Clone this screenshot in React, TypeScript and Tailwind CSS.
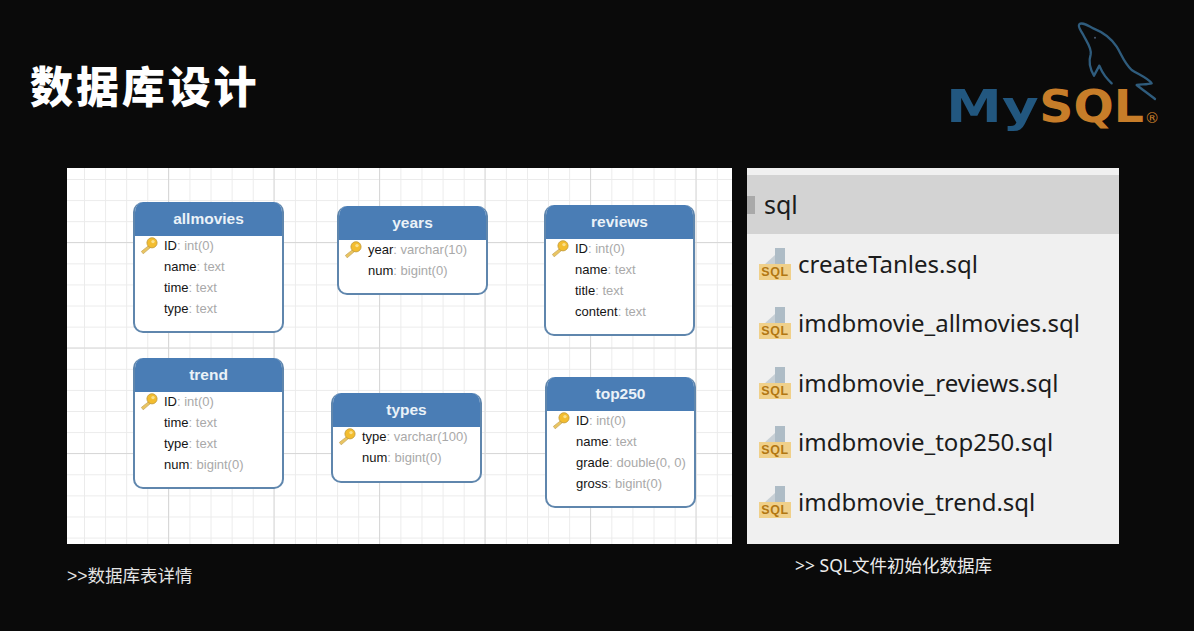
import React from "react";

type Field = { name: string; type: string; key?: boolean };
type Table = { title: string; cls: string; fields: Field[] };

const tables: Table[] = [
  {
    title: "allmovies",
    cls: "left-[66px] top-[34px] h-[131px]",
    fields: [
      { name: "ID", type: "int(0)", key: true },
      { name: "name", type: "text" },
      { name: "time", type: "text" },
      { name: "type", type: "text" },
    ],
  },
  {
    title: "years",
    cls: "left-[270px] top-[38px] h-[89px]",
    fields: [
      { name: "year", type: "varchar(10)", key: true },
      { name: "num", type: "bigint(0)" },
    ],
  },
  {
    title: "reviews",
    cls: "left-[477px] top-[37px] h-[131px]",
    fields: [
      { name: "ID", type: "int(0)", key: true },
      { name: "name", type: "text" },
      { name: "title", type: "text" },
      { name: "content", type: "text" },
    ],
  },
  {
    title: "trend",
    cls: "left-[66px] top-[190px] h-[131px]",
    fields: [
      { name: "ID", type: "int(0)", key: true },
      { name: "time", type: "text" },
      { name: "type", type: "text" },
      { name: "num", type: "bigint(0)" },
    ],
  },
  {
    title: "types",
    cls: "left-[264px] top-[225px] h-[90px]",
    fields: [
      { name: "type", type: "varchar(100)", key: true },
      { name: "num", type: "bigint(0)" },
    ],
  },
  {
    title: "top250",
    cls: "left-[478px] top-[209px] h-[131px]",
    fields: [
      { name: "ID", type: "int(0)", key: true },
      { name: "name", type: "text" },
      { name: "grade", type: "double(0, 0)" },
      { name: "gross", type: "bigint(0)" },
    ],
  },
];

const files = [
  "createTanles.sql",
  "imdbmovie_allmovies.sql",
  "imdbmovie_reviews.sql",
  "imdbmovie_top250.sql",
  "imdbmovie_trend.sql",
];

function KeyIcon() {
  return (
    <svg width="18" height="18" viewBox="0 0 18 18" className="shrink-0">
      <path d="M9.5 8 L1.4 14.4 L3.2 16.8 L11 10 Z" fill="#eac561" stroke="#c9a95f" strokeWidth="0.8" />
      <circle cx="12" cy="5.8" r="5.1" fill="#f3bd2f" stroke="#c09a3e" strokeWidth="0.8" />
      <circle cx="13" cy="4.6" r="1.7" fill="#fbe08a" />
    </svg>
  );
}

function SqlIcon() {
  return (
    <div className="relative h-[32px] w-[32px] shrink-0">
      <svg width="32" height="17" viewBox="0 0 32 17" className="block">
        <path d="M16 0 H26 V17 H16 Z" fill="#aebcc6" />
        <path d="M5 17 L16 7 V17 Z" fill="#c8d0d6" />
      </svg>
      <div className="absolute bottom-0 left-0 flex h-[16px] w-[32px] items-center justify-center bg-[#f0d08a] font-['Liberation_Sans',sans-serif] text-[12.5px] font-bold leading-none tracking-[0.6px] text-[#b27712]">
        SQL
      </div>
    </div>
  );
}

function TableCard({ table }: { table: Table }) {
  return (
    <div className={`absolute flex w-[151px] flex-col overflow-hidden rounded-[10px] border-2 border-t-0 border-[#5f86ad] bg-white ${table.cls}`}>
      <div className="-mx-[2px] flex h-[34px] shrink-0 items-center justify-center bg-[#4a7db5] text-[15.5px] font-bold text-[#eaf2f8]">
        {table.title}
      </div>
      <div className="-mt-px flex flex-col">
        {table.fields.map((f) => (
          <div key={f.name} className="flex h-[21px] shrink-0 items-center text-[13px]">
            <div className="flex w-[29px] shrink-0 justify-end pr-[6px]">{f.key ? <KeyIcon /> : null}</div>
            <span className="text-[#141414]">{f.name}</span>
            <span className="whitespace-pre text-[#a9a9a9]">: {f.type}</span>
          </div>
        ))}
      </div>
    </div>
  );
}

function MysqlLogo() {
  return (
    <svg width="260" height="140" viewBox="0 0 780 420" className="block shrink-0">
      <g transform="translate(450 15)" fill="none" stroke="#2f5c7d" strokeWidth="7" strokeLinejoin="round" strokeLinecap="round">
        <path d="M125 205 C110 190 100 180 88 152 L72 182 C62 165 55 140 62 118 C66 100 50 80 40 60 C32 45 22 35 28 28 C35 20 50 30 70 40 C100 52 125 72 140 95 C155 118 160 140 185 165 C205 178 235 190 245 205 C235 208 215 208 200 210 C215 222 240 240 255 252" />
        <circle cx="75" cy="68" r="3" fill="#4a5a70" stroke="none" />
      </g>
      <text x="78" y="336" textLength="278" lengthAdjust="spacingAndGlyphs" fontFamily="'DejaVu Sans', sans-serif" fontWeight="700" fontSize="132" fill="#22577f">
        My
      </text>
      <text x="358" y="336" textLength="314" lengthAdjust="spacingAndGlyphs" fontFamily="'DejaVu Sans', sans-serif" fontWeight="700" fontSize="132" fill="#c77d29">
        SQL
      </text>
      <text x="674" y="340" fontFamily="'DejaVu Sans', sans-serif" fontSize="44" fill="#c77d29">
        ®
      </text>
    </svg>
  );
}

export default function App() {
  return (
    <div className="flex h-[631px] w-[1194px] flex-col overflow-hidden bg-[#0a0a0a] font-['Liberation_Sans','Noto_Sans_CJK_SC',sans-serif]">
      {/* header */}
      <div className="flex h-[168px] shrink-0 items-start justify-between pl-[30px] pr-[14px] pt-[10px]">
        <h1 className="mt-[44px] font-['Noto_Sans_CJK_SC',sans-serif] text-[43px] font-black leading-[60px] tracking-[2.9px] text-white">
          数据库设计
        </h1>
        <MysqlLogo />
      </div>

      <div className="flex gap-[15px] pl-[67px]">
        {/* er diagram */}
        <div className="flex w-[665px] flex-col">
          <div className="relative h-[376px] bg-white bg-[linear-gradient(to_right,#d8d8d8_1px,transparent_1px),linear-gradient(to_bottom,#d8d8d8_1px,transparent_1px),linear-gradient(to_right,#ebebeb_1px,transparent_1px),linear-gradient(to_bottom,#ebebeb_1px,transparent_1px)] bg-[size:105.5px_105.5px,105.5px_105.5px,21.1px_21.1px,21.1px_21.1px] bg-[position:101px_74px,101px_74px,17px_11px,17px_11px] font-['Liberation_Sans',sans-serif]">
            {tables.map((t) => (
              <TableCard key={t.title} table={t} />
            ))}
          </div>
          <p className="mt-[19px] text-[17.5px] leading-[26px] text-[#e4e4e4]">&gt;&gt;数据库表详情</p>
        </div>

        {/* file list */}
        <div className="flex w-[372px] flex-col">
          <div className="flex h-[376px] flex-col bg-[#f0f0f0] pt-[7px] font-['Noto_Sans',sans-serif]">
            <div className="flex h-[59px] shrink-0 items-center gap-[9px] bg-[#d3d3d3]">
              <div className="h-[18px] w-[8px] bg-[#a9a9a9]" />
              <span className="text-[25px] leading-none text-[#1c1c1c]">sql</span>
            </div>
            <div className="flex flex-col pl-[12px]">
              {files.map((f) => (
                <div key={f} className="flex h-[59.5px] items-center gap-[7px]">
                  <SqlIcon />
                  <span className="text-[24px] leading-none text-[#1c1c1c]">{f}</span>
                </div>
              ))}
            </div>
          </div>
          <p className="mt-[8px] pl-[48px] font-['Noto_Sans','Noto_Sans_CJK_SC',sans-serif] text-[17.5px] leading-[26px] text-[#ececec]">&gt;&gt; SQL文件初始化数据库</p>
        </div>
      </div>
    </div>
  );
}
